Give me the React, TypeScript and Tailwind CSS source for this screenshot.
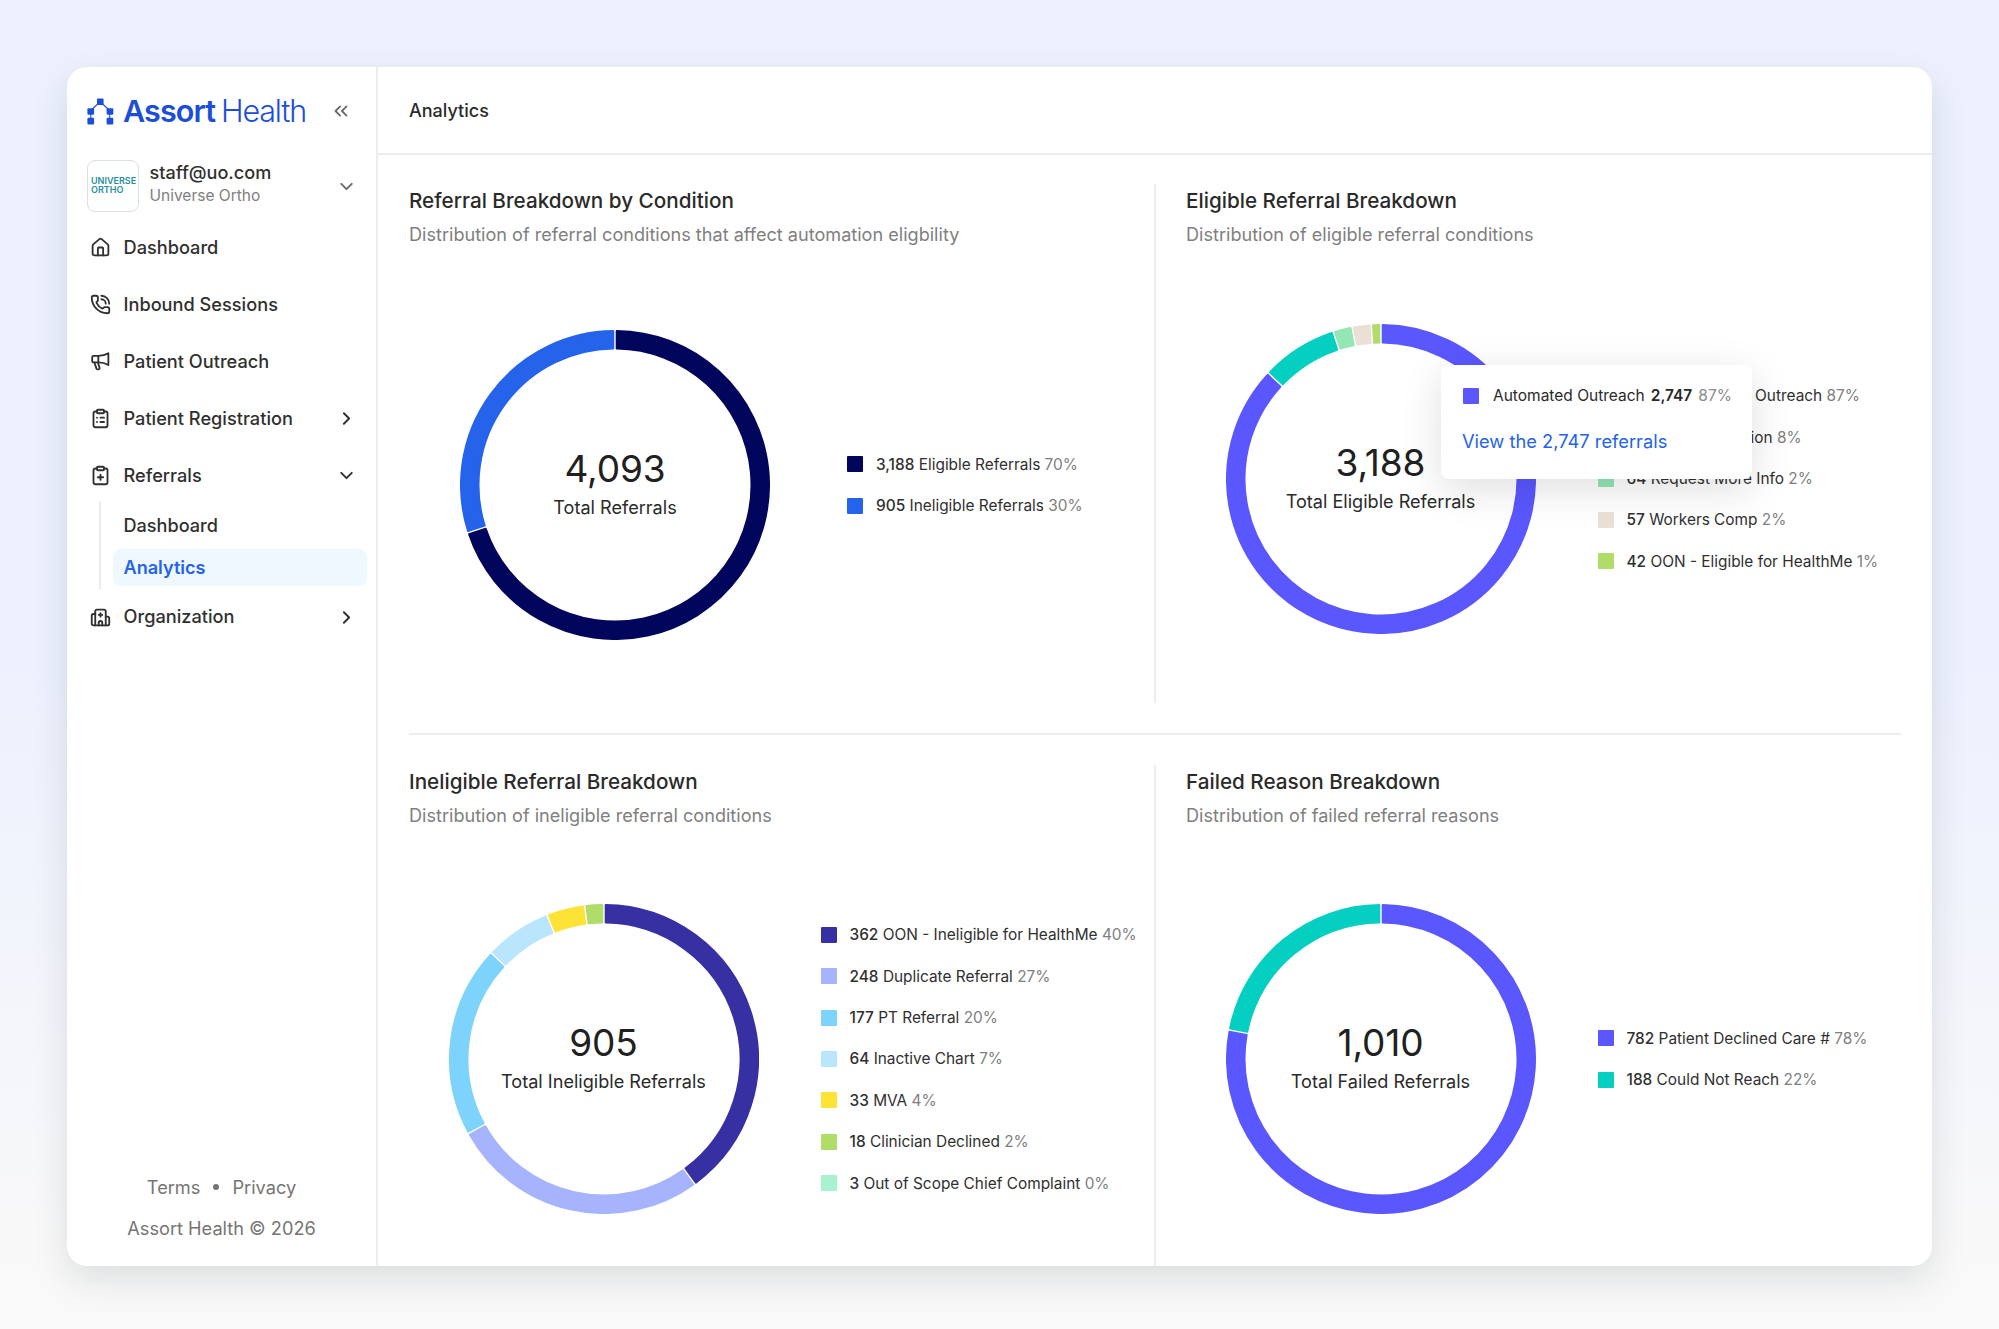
import {
  ChevronDown,
  ChevronRight,
  ChevronsLeft,
  ClipboardList,
  ClipboardPlus,
  Hospital,
  House,
  PhoneCall,
} from 'lucide-react';
import type { ComponentType } from 'react';

type Slice = {
  count: string;
  label: string;
  pct: number;
  color: string;
};

type IconProps = { size?: number; strokeWidth?: number; className?: string };
type IconType = ComponentType<IconProps>;

const byCondition: Slice[] = [
  { count: '3,188', label: 'Eligible Referrals', pct: 70, color: '#01065c' },
  { count: '905', label: 'Ineligible Referrals', pct: 30, color: '#2563eb' },
];

const eligible: Slice[] = [
  { count: '2,747', label: 'Automated Outreach', pct: 87, color: '#5a57ff' },
  { count: '278', label: 'Auto Resolution', pct: 8, color: '#04cfc0' },
  { count: '64', label: 'Request More Info', pct: 2, color: '#93e7b5' },
  { count: '57', label: 'Workers Comp', pct: 2, color: '#eae0d6' },
  { count: '42', label: 'OON - Eligible for HealthMe', pct: 1, color: '#b0dc6a' },
];

const ineligible: Slice[] = [
  { count: '362', label: 'OON - Ineligible for HealthMe', pct: 40, color: '#3730a3' },
  { count: '248', label: 'Duplicate Referral', pct: 27, color: '#a5b4fc' },
  { count: '177', label: 'PT Referral', pct: 20, color: '#7dd3fc' },
  { count: '64', label: 'Inactive Chart', pct: 7, color: '#bae6fd' },
  { count: '33', label: 'MVA', pct: 4, color: '#fde335' },
  { count: '18', label: 'Clinician Declined', pct: 2, color: '#b0dc6a' },
  { count: '3', label: 'Out of Scope Chief Complaint', pct: 0, color: '#a7f3d0' },
];

const failed: Slice[] = [
  { count: '782', label: 'Patient Declined Care #', pct: 78, color: '#5a57ff' },
  { count: '188', label: 'Could Not Reach', pct: 22, color: '#04cfc0' },
];

// Donut geometry. Slices are inset by 1px and stroked to get soft corners.
const OUTER = 154;
const INNER = 136.5;
const GAP = 1.7;

function point(r: number, angle: number) {
  return `${(155 + r * Math.sin(angle)).toFixed(2)} ${(155 - r * Math.cos(angle)).toFixed(2)}`;
}

function arc(start: number, end: number) {
  const a = (start / 100) * Math.PI * 2;
  const b = (end / 100) * Math.PI * 2;
  const large = b - a > Math.PI ? 1 : 0;
  return [
    `M${point(OUTER, a + GAP / OUTER)}`,
    `A${OUTER} ${OUTER} 0 ${large} 1 ${point(OUTER, b - GAP / OUTER)}`,
    `L${point(INNER, b - GAP / INNER)}`,
    `A${INNER} ${INNER} 0 ${large} 0 ${point(INNER, a + GAP / INNER)}`,
    'Z',
  ].join(' ');
}

function Donut({ data, total, label }: { data: Slice[]; total: string; label: string }) {
  let start = 0;
  const slices = data
    .filter((s) => s.pct > 0)
    .map((s) => {
      const d = arc(start, start + s.pct);
      start += s.pct;
      return { d, color: s.color };
    });

  return (
    <div className="relative size-[310px] shrink-0">
      <svg viewBox="0 0 310 310" className="size-full">
        {slices.map((s) => (
          <path key={s.color} d={s.d} fill={s.color} stroke={s.color} strokeWidth={2} strokeLinejoin="round" />
        ))}
      </svg>
      <div className="absolute inset-0 flex flex-col items-center justify-center pb-[3px]">
        <div className="text-[37px] leading-[44px] tracking-[-0.1px] text-[#202020]">{total}</div>
        <div className="mt-[3px] text-[18.1px] leading-[26px] text-[#2a2a2a]">{label}</div>
      </div>
    </div>
  );
}

function Legend({ data }: { data: Slice[] }) {
  return (
    <ul className="flex flex-col gap-[17.4px]">
      {data.map((s) => (
        <li key={s.label} className="flex h-6 items-center gap-[13px] text-[15.4px] whitespace-nowrap">
          <span className="size-4 rounded-[1px]" style={{ backgroundColor: s.color }} />
          <span className="text-[#303030]">
            <span className="font-medium">{s.count}</span> {s.label}{' '}
            <span className="text-[#808080]">{s.pct}%</span>
          </span>
        </li>
      ))}
    </ul>
  );
}

function PanelTitle({ title, subtitle }: { title: string; subtitle: string }) {
  return (
    <>
      <h2 className="pt-px text-[20.7px] leading-8 font-medium text-[#2a2a2a]">{title}</h2>
      <p className="mt-px pb-px text-[18.1px] leading-8 text-[#808080]">{subtitle}</p>
    </>
  );
}

function SliceTooltip() {
  return (
    <div className="absolute top-[181px] left-[285px] h-[114px] w-[311px] rounded-lg bg-white pt-[19px] pl-[22px] shadow-[0_10px_40px_rgba(0,0,0,0.13)]">
      <div className="flex h-6 items-center text-[15.5px] whitespace-nowrap text-[#2a2a2a]">
        <span className="mr-[14px] size-4 rounded-[1px] bg-[#5a57ff]" />
        Automated Outreach
        <span className="ml-[6px] font-semibold">2,747</span>
        <span className="ml-[6px] text-[#8c8c8c]">87%</span>
      </div>
      <a className="mt-[19px] -ml-px block text-[18.3px] leading-[28px] text-[#2563eb]">View the 2,747 referrals</a>
    </div>
  );
}

function MegaphoneIcon({ size = 24, strokeWidth = 2, className }: IconProps) {
  return (
    <svg
      width={size}
      height={size}
      viewBox="0 0 24 24"
      fill="none"
      stroke="currentColor"
      strokeWidth={strokeWidth}
      strokeLinecap="round"
      strokeLinejoin="round"
      className={className}
    >
      <path d="M9.5 5.5H4A1.5 1.5 0 0 0 2.5 7v4.5A1.5 1.5 0 0 0 4 13h5.5c4.5 0 8.5 1.2 11.5 3V2.5c-3 1.8-7 3-11.5 3Z" />
      <path d="M9.5 5.5V13" />
      <path d="m5 13.2 2.2 6.400a2 2 0 0 0 2.6 1.3l.7-.3a1 1 0 0 0 .5-1.3L9 13.2" />
    </svg>
  );
}

type Item = { name: string; icon: IconType; chevron?: IconType };

const navItems: Item[] = [
  { name: 'Dashboard', icon: House },
  { name: 'Inbound Sessions', icon: PhoneCall },
  { name: 'Patient Outreach', icon: MegaphoneIcon },
  { name: 'Patient Registration', icon: ClipboardList, chevron: ChevronRight },
  { name: 'Referrals', icon: ClipboardPlus, chevron: ChevronDown },
];

function NavItem({ item }: { item: Item }) {
  const Icon = item.icon;
  const Chevron = item.chevron;
  return (
    <div className="flex h-[57.1px] items-center pr-[19px] pl-[23px] text-[18.2px] font-medium text-[#303030]">
      <Icon size={21} strokeWidth={2.1} className="mr-[12.5px]" />
      <span className="flex-1">{item.name}</span>
      {Chevron && <Chevron size={21} strokeWidth={2.2} />}
    </div>
  );
}

function Logo() {
  return (
    <div className="flex items-center text-[#1d4ed8]">
      <svg width="27" height="27" viewBox="0 0 27 27" fill="currentColor">
        <path d="M12.8 4 3.8 12.5V22M13.5 4l9.2 8.5V22" fill="none" stroke="currentColor" strokeWidth="1.1" />
        <rect x="10" y="0.5" width="6.6" height="6.6" rx="1" />
        <rect x="0.4" y="10.3" width="6.7" height="6.4" rx="1" />
        <rect x="0.4" y="19.8" width="6.7" height="6.6" rx="1" />
        <rect x="19.6" y="10.3" width="6.7" height="6.4" rx="1" />
        <rect x="19.6" y="19.8" width="6.7" height="6.6" rx="1" />
      </svg>
      <span className="ml-[9px] text-[30.5px] leading-none font-semibold tracking-[-0.9px]">Assort</span>
      <span className="ml-[6px] text-[30.5px] leading-none font-light tracking-[-1.2px]">Health</span>
    </div>
  );
}

function Sidebar() {
  return (
    <aside className="flex w-[311px] shrink-0 flex-col border-r-2 border-[#ededed]">
      <div className="flex h-[88px] items-center justify-between pr-[24px] pl-5">
        <Logo />
        <ChevronsLeft size={22} strokeWidth={2} className="text-[#6b6b6b]" />
      </div>

      <div className="mt-[5px] flex h-[52px] items-center pr-[19px] pl-5">
        <div className="flex size-[52px] flex-col justify-center rounded-lg border border-[#e0e0e0] bg-[#fdfefe] pb-[2px] pl-[3px] text-[9px] leading-[9.5px] font-semibold text-[#2a8d9c]">
          <span>UNIVERSE</span>
          <span>ORTHO</span>
        </div>
        <div className="ml-[10.5px] flex-1 pb-[4px]">
          <div className="text-[18.1px] leading-[22px] font-medium text-[#303030]">staff@uo.com</div>
          <div className="mt-[2px] text-[15.5px] leading-[22px] text-[#808080]">Universe Ortho</div>
        </div>
        <ChevronDown size={21} strokeWidth={2.2} className="text-[#6b6b6b]" />
      </div>

      <nav className="mt-[7px]">
        {navItems.map((item) => (
          <NavItem key={item.name} item={item} />
        ))}
        <div className="mr-[9px] -mt-[3px] ml-[32px] flex h-[89px] flex-col justify-end border-l-2 border-[#ededed] pb-[4px] pl-[12px] text-[18.1px] font-medium text-[#303030]">
          <div className="flex h-[37px] items-center pl-[10.5px]">Dashboard</div>
          <div className="mt-[5px] flex h-[37px] items-center rounded-lg bg-[#f0f8ff] pl-[10.5px] font-semibold text-[#2563eb]">
            Analytics
          </div>
        </div>
        <div className="-mt-[2px]">
          <NavItem item={{ name: 'Organization', icon: Hospital, chevron: ChevronRight }} />
        </div>
      </nav>

      <footer className="mt-auto flex flex-col items-center pb-[22px] text-[18.2px] leading-8 text-[#757575]">
        <div className="mb-[9.5px] flex items-center gap-[13px]">
          <span>Terms</span>
          <span className="size-[6px] rounded-full bg-[#757575]" />
          <span>Privacy</span>
        </div>
        <div>Assort Health © 2026</div>
      </footer>
    </aside>
  );
}

export default function App() {
  return (
    <div className="h-[1329px] w-[1999px] bg-linear-to-b from-[#edf1fe] from-50% to-[#f9f9f9] to-95% p-[67px] font-['Inter',sans-serif]">
      <div className="flex h-[1199px] w-[1865px] overflow-hidden rounded-[20px] bg-white shadow-[0_14px_36px_rgba(20,30,40,0.12)]">
        <Sidebar />

        <main className="flex flex-1 flex-col">
          <header className="flex h-[88px] items-center border-b-2 border-[#ededed] pl-[31px] text-[18px] font-medium text-[#2a2a2a]">
            Analytics
          </header>

          <div className="mr-[31px] ml-[31px] flex flex-1 flex-col">
            <div className="mt-[29px] grid h-[519px] grid-cols-[745px_1fr]">
              <section>
                <PanelTitle title="Referral Breakdown by Condition" subtitle="Distribution of referral conditions that affect automation eligbility" />
                <div className="mt-[79px] flex items-center gap-[77px] pl-[51px]">
                  <Donut data={byCondition} total="4,093" label="Total Referrals" />
                  <Legend data={byCondition} />
                </div>
              </section>
              <section className="relative border-l-2 border-[#ededed] pl-[30px]">
                <PanelTitle title="Eligible Referral Breakdown" subtitle="Distribution of eligible referral conditions" />
                <div className="mt-[72.5px] flex items-center gap-[62px] pl-[39.5px]">
                  <Donut data={eligible} total="3,188" label="Total Eligible Referrals" />
                  <Legend data={eligible} />
                </div>
                <SliceTooltip />
              </section>
            </div>

            <div className="mt-[30px] h-[2px] bg-[#ededed]" />

            <div className="mt-[30px] grid flex-1 grid-cols-[745px_1fr]">
              <section>
                <PanelTitle title="Ineligible Referral Breakdown" subtitle="Distribution of ineligible referral conditions" />
                <div className="mt-[72px] flex items-center gap-[62px] pl-[39.5px]">
                  <Donut data={ineligible} total="905" label="Total Ineligible Referrals" />
                  <Legend data={ineligible} />
                </div>
              </section>
              <section className="border-l-2 border-[#ededed] pl-[30px]">
                <PanelTitle title="Failed Reason Breakdown" subtitle="Distribution of failed referral reasons" />
                <div className="mt-[72px] flex items-center gap-[62px] pl-[39.5px]">
                  <Donut data={failed} total="1,010" label="Total Failed Referrals" />
                  <Legend data={failed} />
                </div>
              </section>
            </div>
          </div>
        </main>
      </div>
    </div>
  );
}
